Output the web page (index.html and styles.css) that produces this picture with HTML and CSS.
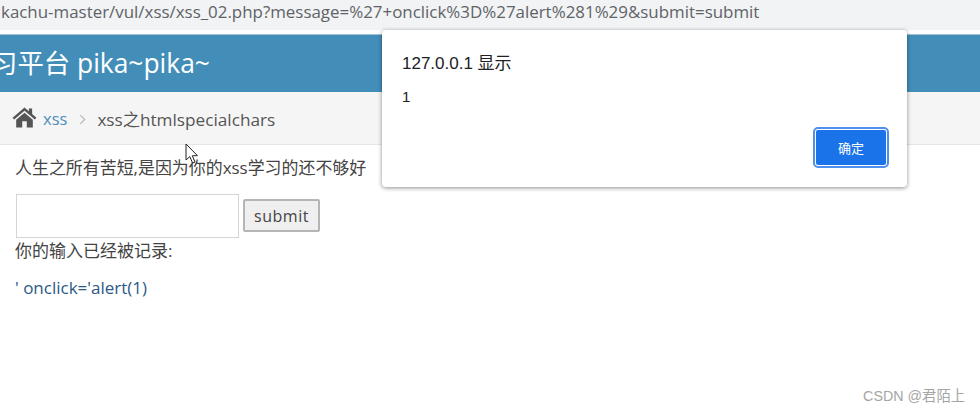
FILE: index.html
```html
<!doctype html>
<html>
<head>
    <meta charset="utf-8">
    <title>xss之htmlspecialchars</title>
    <link rel="stylesheet" href="styles.css">
</head>
<body>
    <div class="url-bar">kachu-master/vul/xss/xss_02.php?message=%27+onclick%3D%27alert%281%29&amp;submit=submit</div>

    <div class="navbar">
        <span class="brand">习平台 pika~pika~</span>
    </div>

    <div class="breadcrumbs">
        <svg class="home-icon" viewBox="0 0 26 22" width="25" height="21">
            <path d="M13 0.5 L0.5 11.2 L2.2 13.2 L13 4 L23.8 13.2 L25.5 11.2 L21 7.3 L21 1.5 L17.6 1.5 L17.6 4.4 Z" fill="#555"/>
            <path d="M4.3 13.4 L13 6 L21.7 13.4 L21.7 21.5 L15.4 21.5 L15.4 15 L10.6 15 L10.6 21.5 L4.3 21.5 Z" fill="#555"/>
        </svg>
        <a class="crumb-link" href="#">xss</a>
        <svg class="crumb-sep" viewBox="0 0 8 12" width="7" height="11">
            <path d="M1.5 1 L6.5 6 L1.5 11" fill="none" stroke="#b2b6bf" stroke-width="1.3"/>
        </svg>
        <span class="crumb-current">xss之htmlspecialchars</span>
    </div>

    <div class="content">
        <p class="quote">人生之所有苦短,是因为你的xss学习的还不够好</p>
        <form class="xss-form" action="#">
            <input class="xss-input" type="text">
            <input class="xss-submit" type="submit" value="submit">
        </form>
        <p class="notice">你的输入已经被记录:</p>
        <p class="echo">' onclick='alert(1)</p>
    </div>

    <div class="alert-box">
        <p class="alert-title">127.0.0.1 显示</p>
        <p class="alert-msg">1</p>
        <div class="alert-actions">
            <button class="alert-ok">确定</button>
        </div>
    </div>

    <svg class="cursor" viewBox="0 0 14 22" width="14" height="22">
        <path d="M1 1 L1 17 L4.8 13.6 L7.6 20 L10 19 L7.3 12.8 L12.4 12.6 Z" fill="#fff" stroke="#222" stroke-width="1"/>
    </svg>

    <div class="watermark">CSDN @君陌上</div>
</body>
</html>
```

FILE: styles.css
```css
html, body {
    height: 100%;
}

body {
    position: relative;
    margin: 0;
    overflow: hidden;
    background: #fff;
    font-family: "Open Sans", "Noto Sans CJK SC", sans-serif;
    font-size: 17px;
    color: #444;
}

p {
    margin: 0;
}

.url-bar {
    height: 30px;
    margin-bottom: 4px;
    padding-left: 1px;
    background: #f1f3f4;
    font-size: 16.92px;
    line-height: 23px;
    color: #5f6368;
    white-space: nowrap;
}

.navbar {
    height: 58px;
    overflow: hidden;
    background: #438eb9;
    border-top: 1px solid #9fc3d8;
    box-sizing: border-box;
}

.brand {
    display: block;
    margin-left: -9px;
    font-size: 26.4px;
    line-height: 57px;
    color: #fff;
    white-space: nowrap;
}

.breadcrumbs {
    display: flex;
    align-items: center;
    height: 53px;
    padding-left: 12px;
    box-sizing: border-box;
    background: #f5f5f5;
    border-bottom: 1px solid #e5e5e5;
}

.home-icon {
    margin: -2px 6px 0 0;
}

.crumb-link {
    color: #4c8fbd;
    font-size: 16.5px;
    text-decoration: none;
}

.crumb-sep {
    margin: 2px 11px 0 12px;
}

.crumb-current {
    font-size: 17.2px;
    color: #555;
}

.content {
    padding: 11px 0 0 15px;
}

.quote {
    font-size: 16.95px;
    line-height: 24px;
}

.xss-form {
    display: flex;
    align-items: flex-start;
    margin-top: 14px;
    padding-left: 1px;
}

.xss-input {
    width: 223px;
    height: 44px;
    padding: 0;
    box-sizing: border-box;
    border: 1px solid #d5d5d5;
    background: #fff;
}

.xss-submit {
    width: 77px;
    height: 33px;
    margin: 5px 0 0 4px;
    padding: 0;
    border: 2px solid #b5b5b5;
    border-radius: 2px;
    background: #efefef;
    font-family: inherit;
    font-size: 16px;
    letter-spacing: 0.5px;
    color: #444;
}

.notice {
    line-height: 26px;
}

.echo {
    margin-top: 12px;
    line-height: 24px;
    color: #2a5a85;
}

.alert-box {
    position: absolute;
    top: 30px;
    left: 382px;
    width: 525px;
    height: 157px;
    padding: 21px 20px 0;
    box-sizing: border-box;
    background: #fff;
    border-radius: 4px;
    box-shadow: 0 1px 4px rgba(0, 0, 0, 0.45);
    font-family: "Liberation Sans", "Noto Sans CJK SC", sans-serif;
    color: #202124;
}

.alert-title {
    font-size: 17px;
    line-height: 25px;
}

.alert-msg {
    margin-top: 11px;
    font-size: 15px;
    line-height: 20px;
}

.alert-actions {
    display: flex;
    justify-content: flex-end;
    margin-top: 21px;
}

.alert-ok {
    width: 74px;
    height: 39px;
    margin-right: -1px;
    padding: 0;
    border: 2px solid #fff;
    border-radius: 4px;
    outline: 2px solid #4d90f0;
    outline-offset: -1px;
    background: #1a73e8;
    font-family: "Noto Sans CJK SC", sans-serif;
    font-size: 13px;
    color: #fff;
}

.cursor {
    position: absolute;
    top: 143px;
    left: 185px;
}

.watermark {
    position: absolute;
    right: 15px;
    bottom: 6px;
    font-family: "Liberation Sans", "Noto Sans CJK SC", sans-serif;
    font-size: 14.3px;
    line-height: 20px;
    color: #a5a5a5;
}
```
